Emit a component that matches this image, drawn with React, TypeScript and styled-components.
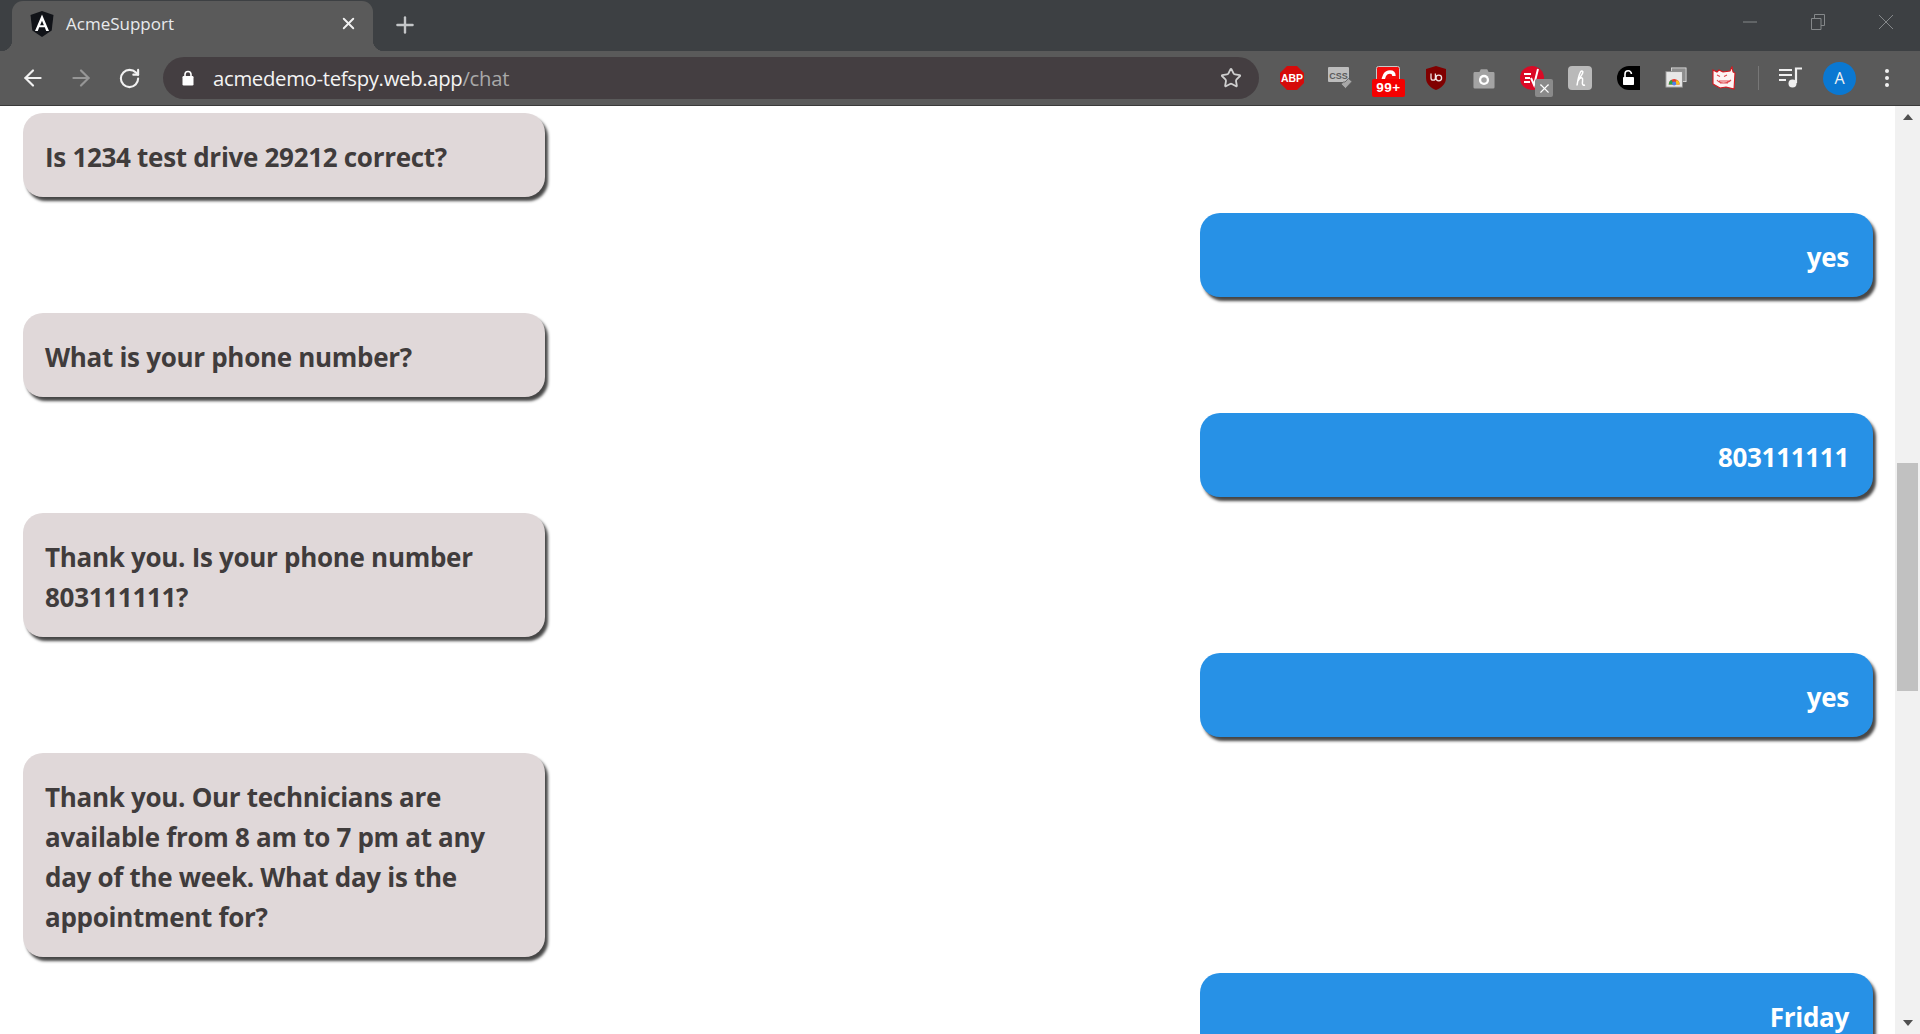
import React from 'react';
import styled, { createGlobalStyle } from 'styled-components';
import { ArrowLeft, ArrowRight, RotateCw, Star, Plus, X } from 'lucide-react';

const UI_FONT = '"Open Sans", "Noto Sans", "Liberation Sans", sans-serif';

const GlobalStyle = createGlobalStyle`
  html, body {
    margin: 0;
    padding: 0;
    height: 100%;
    overflow: hidden;
    background: #fff;
    font-family: ${UI_FONT};
  }
  * { box-sizing: border-box; }
`;

const messages = [
  { id: 1, from: 'bot', text: 'Is 1234 test drive 29212 correct?' },
  { id: 2, from: 'user', text: 'yes' },
  { id: 3, from: 'bot', text: 'What is your phone number?' },
  { id: 4, from: 'user', text: '803111111' },
  { id: 5, from: 'bot', text: 'Thank you. Is your phone number 803111111?' },
  { id: 6, from: 'user', text: 'yes' },
  {
    id: 7,
    from: 'bot',
    text: 'Thank you. Our technicians are available from 8 am to 7 pm at any day of the week. What day is the appointment for?',
  },
  { id: 8, from: 'user', text: 'Friday' },
];

const App: React.FC = () => (
  <Page>
    <GlobalStyle />
    <BrowserChrome>
      <TabStrip>
        <Tab>
          <AngularLogo />
          <TabTitle>AcmeSupport</TabTitle>
          <TabClose>
            <X size={19} strokeWidth={2.4} />
          </TabClose>
        </Tab>
        <NewTab>
          <Plus size={26} strokeWidth={2.2} />
        </NewTab>
        <WindowControls>
          <WindowButton>
            <svg width="14" height="14" viewBox="0 0 14 14">
              <path d="M0 7h14" stroke="#85888a" strokeWidth="1" />
            </svg>
          </WindowButton>
          <WindowButton>
            <svg width="14" height="16" viewBox="0 0 14 16" fill="none" stroke="#85888a">
              <path d="M.5 4.500h9.500v11H.5z" />
              <path d="M3.500 4V.5h10v11H10" />
            </svg>
          </WindowButton>
          <WindowButton>
            <svg width="16" height="16" viewBox="0 0 16 16">
              <path d="M1 1l14 14M15 1L1 15" stroke="#85888a" strokeWidth="1" />
            </svg>
          </WindowButton>
        </WindowControls>
      </TabStrip>
      <Toolbar>
        <NavButton>
          <ArrowLeft size={26} strokeWidth={2} />
        </NavButton>
        <NavButton $disabled>
          <ArrowRight size={26} strokeWidth={2} />
        </NavButton>
        <NavButton>
          <RotateCw size={23} strokeWidth={2.2} />
        </NavButton>
        <Omnibox>
          <LockIcon />
          <UrlText>
            acmedemo-tefspy.web.app<UrlPath>/chat</UrlPath>
          </UrlText>
          <StarButton>
            <Star size={22} strokeWidth={2} />
          </StarButton>
        </Omnibox>
        <Extensions>
          <ExtensionSlot><AbpIcon /></ExtensionSlot>
          <ExtensionSlot><CssIcon /></ExtensionSlot>
          <ExtensionSlot>
            <RedCIcon />
            <CountBadge>99+</CountBadge>
          </ExtensionSlot>
          <ExtensionSlot><ShieldIcon /></ExtensionSlot>
          <ExtensionSlot><CameraIcon /></ExtensionSlot>
          <ExtensionSlot>
            <VpnIcon />
            <OffBadge>
              <X size={15} strokeWidth={1.8} />
            </OffBadge>
          </ExtensionSlot>
          <ExtensionSlot><HIcon /></ExtensionSlot>
          <ExtensionSlot><UnlockIcon /></ExtensionSlot>
          <ExtensionSlot><ChromeWindowsIcon /></ExtensionSlot>
          <ExtensionSlot><CatIcon /></ExtensionSlot>
        </Extensions>
        <ToolbarDivider />
        <MusicIcon />
        <Avatar>A</Avatar>
        <MenuDots>
          <Dot />
          <Dot />
          <Dot />
        </MenuDots>
      </Toolbar>
    </BrowserChrome>
    <Viewport>
      <ChatArea>
        {messages.map((m) =>
          m.from === 'bot' ? (
            <BotBubble key={m.id}>{m.text}</BotBubble>
          ) : (
            <UserBubble key={m.id}>{m.text}</UserBubble>
          ),
        )}
      </ChatArea>
      <Scrollbar>
        <ScrollArrow $up />
        <ScrollTrack>
          <ScrollThumb />
        </ScrollTrack>
        <ScrollArrow />
      </Scrollbar>
    </Viewport>
  </Page>
);

export default App;

const AngularLogo = () => (
  <svg width="24" height="26" viewBox="0 0 24 26">
    <path d="M12 0L23.500 4l-1.800 15.500L12 26 2.300 19.500.5 4z" fill="#111318" />
    <path d="M12 3.500L5 20h2.800l1.400-3.700h5.600l1.400 3.700H19L12 3.500zm0 6.200l1.900 4.500h-3.800L12 9.700z" fill="#fff" />
  </svg>
);

const LockIcon = () => (
  <svg width="12" height="16" viewBox="0 0 12 16">
    <path d="M3 7V4.500a3 3 0 0 1 6 0V7" fill="none" stroke="#fff" strokeWidth="1.600" />
    <rect x="0.500" y="6" width="11" height="9.500" rx="1.200" fill="#fff" />
  </svg>
);

const AbpIcon = () => (
  <svg width="24" height="24" viewBox="0 0 24 24">
    <path d="M7 0h10l7 7v10l-7 7H7l-7-7V7z" fill="#d60a0a" />
    <text x="12" y="16" textAnchor="middle" fontFamily="Liberation Sans" fontWeight="700" fontSize="10.500" fill="#fff">ABP</text>
  </svg>
);

const CssIcon = () => (
  <svg width="24" height="22" viewBox="0 0 24 22">
    <rect x="0" y="0" width="21" height="15" rx="1" fill="#bdbdbd" />
    <text x="10.500" y="11.500" textAnchor="middle" fontFamily="Liberation Sans" fontWeight="700" fontSize="9" fill="#5a5a5a">CSS</text>
    <path d="M17 15l3.500-3.500 3.500 3-6.500 7-4.500-4.500 2.500-2z" fill="#a8a8a8" stroke="#5a5a5a" strokeWidth="0.800" />
  </svg>
);

const RedCIcon = () => (
  <svg width="24" height="24" viewBox="0 0 24 24">
    <rect x="0.500" y="0.500" width="23" height="23" rx="2" fill="#f20d0d" stroke="#c9c9c9" />
    <path d="M7 17C7 10 9.500 6 14 6c2.500 0 4 1.500 4 4" fill="none" stroke="#fff" strokeWidth="3.400" />
  </svg>
);

const ShieldIcon = () => (
  <svg width="20" height="24" viewBox="0 0 20 24">
    <path d="M10 0l10 3v9c0 6-5 10-10 12C5 22 0 18 0 12V3z" fill="#800000" />
    <path d="M5 7.500v4.500a2.200 2.200 0 0 0 4.400 0V7.500M10 12a2.800 2.800 0 1 0 5.600 0 2.800 2.800 0 1 0-5.600 0z" fill="none" stroke="#f0e4e4" strokeWidth="1.300" />
  </svg>
);

const CameraIcon = () => (
  <svg width="22" height="21" viewBox="0 0 24 22">
    <path d="M2 4h5l1.500-3h7L17 4h5a1.500 1.500 0 0 1 1.500 1.500v15A1.500 1.500 0 0 1 22 22H2a1.500 1.500 0 0 1-1.500-1.500v-15A1.500 1.500 0 0 1 2 4z" fill="#a3a3a3" />
    <circle cx="12" cy="12.500" r="5.500" fill="#fff" />
    <circle cx="12" cy="12.500" r="3" fill="#a3a3a3" />
  </svg>
);

const VpnIcon = () => (
  <svg width="24" height="24" viewBox="0 0 24 24">
    <circle cx="12" cy="12" r="12" fill="#da0a26" />
    <path d="M4 8h7M5 12h5M4 16h6" stroke="#fff" strokeWidth="1.800" />
    <path d="M11 12l3 7 4-16" fill="none" stroke="#fff" strokeWidth="2" />
  </svg>
);

const HIcon = () => (
  <svg width="24" height="24" viewBox="0 0 24 24">
    <rect width="24" height="24" rx="4" fill="#b9b9b9" />
    <path d="M9 19.500c.8-5 1.500-10 3.500-13.500 1.200-1.800 3-1 2.200 1-1 2.500-3.500 5-4.700 8 1-2 2.800-3.500 4-3 1.500.7.200 3.500.4 5.500.1 1.500 1.200 2 2.600 1.500" fill="none" stroke="#fff" strokeWidth="1.500" />
  </svg>
);

const UnlockIcon = () => (
  <svg width="23" height="24" viewBox="0 0 23 24">
    <path d="M12 0h11v24H12A12 12 0 0 1 12 0z" fill="#000" />
    <path d="M8 11V8a3.200 3.200 0 0 1 6.400 0" fill="none" stroke="#fff" strokeWidth="1.600" />
    <rect x="6" y="11" width="11" height="8" rx="0.800" fill="#fff" />
  </svg>
);

const ChromeWindowsIcon = () => (
  <svg width="22" height="22" viewBox="0 0 24 24">
    <rect x="7" y="1" width="16" height="15" fill="#8e8e8e" stroke="#eee" strokeWidth="0.800" />
    <rect x="1" y="5" width="18" height="17" fill="#e8e8e8" stroke="#8d8d8d" />
    <path d="M4 19a6 6 0 0 1 12 0z" fill="#e33b2e" />
    <path d="M4 19a6 6 0 0 1 3-5l3 5z" fill="#2aa24b" />
    <path d="M16 19a6 6 0 0 0-3-5l-3 5z" fill="#f7c21b" />
    <circle cx="10" cy="18" r="2.200" fill="#4d7ee8" />
  </svg>
);

const CatIcon = () => (
  <svg width="24" height="24" viewBox="0 0 24 24">
    <path d="M1 4l4 2 2-2 4 2 7-1 2-4 1 5 2 1-1 16-8-2-6 1-7-4z" fill="#fdf4f4" stroke="#d8141c" strokeWidth="1.100" />
    <path d="M5 9l3 1.500M15 9l-3 1.500M5 14c3 4 10 4 14 0M7 15h10M8 17h8" fill="none" stroke="#e0484e" strokeWidth="1.100" />
  </svg>
);

const MusicIcon = () => (
  <MusicWrap>
    <svg width="24" height="22" viewBox="0 0 24 22">
      <path d="M0 3h13M0 8h13M0 13h7" stroke="#f0f0f0" strokeWidth="2" />
      <path d="M17 16V1.500h6" fill="none" stroke="#f0f0f0" strokeWidth="2.200" />
      <circle cx="13.500" cy="16.500" r="4" fill="#f0f0f0" />
    </svg>
  </MusicWrap>
);

const Page = styled.div`
  height: 100vh;
  display: flex;
  flex-direction: column;
  overflow: hidden;
`;

const BrowserChrome = styled.header`
  flex: none;
  border-bottom: 1px solid #3a3a3a;
`;

const TabStrip = styled.div`
  height: 51px;
  padding-left: 12px;
  display: flex;
  align-items: flex-end;
  background: #3d4043;
`;

const Tab = styled.div`
  position: relative;
  width: 361px;
  height: 50px;
  padding: 0 15px 5px 18px;
  display: flex;
  align-items: center;
  border-radius: 11px 11px 0 0;
  background: #5a5a5a;

  &::before,
  &::after {
    content: '';
    position: absolute;
    bottom: 0;
    width: 11px;
    height: 11px;
  }

  &::before {
    left: -11px;
    background: radial-gradient(circle at 0 0, transparent 11px, #5a5a5a 11.500px);
  }

  &::after {
    right: -11px;
    background: radial-gradient(circle at 100% 0, transparent 11px, #5a5a5a 11.500px);
  }
`;

const TabTitle = styled.span`
  margin-left: 12px;
  flex: 1;
  color: #e8eaed;
  font-size: 17px;
`;

const TabClose = styled.span`
  display: flex;
  color: #f1f1f1;
`;

const NewTab = styled.div`
  width: 26px;
  height: 26px;
  margin: 0 0 13px 19px;
  color: #c4c6c8;
`;

const WindowControls = styled.div`
  margin-left: auto;
  height: 100%;
  padding: 0 0 8px;
  display: flex;
  align-items: center;
`;

const WindowButton = styled.div`
  width: 68px;
  display: flex;
  justify-content: center;
`;

const Toolbar = styled.div`
  height: 54px;
  padding: 0 0 0 20px;
  display: flex;
  align-items: center;
  background: #5a5a5a;
`;

const NavButton = styled.div<{ $disabled?: boolean }>`
  width: 26px;
  height: 26px;
  margin-right: 22px;
  display: flex;
  align-items: center;
  justify-content: center;
  color: ${({ $disabled }) => ($disabled ? '#969696' : '#f1f1f1')};
`;

const Omnibox = styled.div`
  width: 1096px;
  height: 42px;
  margin-left: -1px;
  padding: 0 17px 0 19px;
  display: flex;
  align-items: center;
  border-radius: 21px;
  background: #443e41;
`;

const UrlText = styled.span`
  margin-left: 19px;
  flex: 1;
  color: #f4f4f4;
  font-size: 20.300px;
  letter-spacing: -0.300px;
  white-space: nowrap;
`;

const UrlPath = styled.span`
  color: #a9a9a9;
`;

const StarButton = styled.span`
  display: flex;
  color: #cfcfcf;
`;

const Extensions = styled.div`
  margin-left: 9px;
  display: flex;
  align-items: center;
`;

const ExtensionSlot = styled.div`
  position: relative;
  width: 48px;
  height: 48px;
  display: flex;
  align-items: center;
  justify-content: center;
`;

const CountBadge = styled.span`
  position: absolute;
  left: 8px;
  top: 25px;
  width: 33px;
  height: 18px;
  border-radius: 2px;
  background: #f40000;
  color: #fff;
  font-family: 'Liberation Sans', sans-serif;
  font-size: 13.500px;
  font-weight: 700;
  line-height: 18px;
  letter-spacing: 0.500px;
  text-align: center;
`;

const OffBadge = styled.span`
  position: absolute;
  left: 27px;
  top: 25px;
  width: 18px;
  height: 18px;
  display: flex;
  align-items: center;
  justify-content: center;
  border-radius: 2px;
  background: #8a8a8a;
  color: #fff;
`;

const ToolbarDivider = styled.div`
  width: 1px;
  height: 24px;
  margin-left: 10px;
  background: #777;
`;

const MusicWrap = styled.div`
  margin-left: 20px;
  display: flex;
`;

const Avatar = styled.div`
  width: 33px;
  height: 33px;
  margin-left: 20px;
  display: flex;
  align-items: center;
  justify-content: center;
  border-radius: 50%;
  background: #0a78d2;
  color: #f2f2f2;
  font-size: 16px;
`;

const MenuDots = styled.div`
  margin-left: 29px;
  display: flex;
  flex-direction: column;
  gap: 3px;
`;

const Dot = styled.span`
  width: 4px;
  height: 4px;
  border-radius: 50%;
  background: #f1f1f1;
`;

const Viewport = styled.main`
  flex: 1;
  min-height: 0;
  display: flex;
`;

const ChatArea = styled.div`
  flex: 1;
  min-width: 0;
  padding: 7px 22px 0 23px;
  display: flex;
  flex-direction: column;
  gap: 16px;
  overflow: hidden;
`;

const BotBubble = styled.div`
  flex: none;
  align-self: flex-start;
  width: 522px;
  padding: 24px 22px 20px;
  border-radius: 20px;
  background: #e0d8d9;
  box-shadow: 3px 4px 3px rgba(0, 0, 0, 0.72);
  color: #403c3c;
  font-size: 26px;
  font-weight: 700;
  line-height: 40px;
  letter-spacing: -0.300px;
`;

const UserBubble = styled(BotBubble)`
  align-self: flex-end;
  width: 673px;
  padding: 24px 24px 20px 22px;
  background: #2791e6;
  color: #fff;
  text-align: right;
`;

const Scrollbar = styled.div`
  flex: none;
  width: 25px;
  display: flex;
  flex-direction: column;
  background: #f1f1f1;
`;

const ScrollArrow = styled.div<{ $up?: boolean }>`
  flex: none;
  height: 22px;
  display: flex;
  align-items: center;
  justify-content: center;

  &::before {
    content: '';
    border-left: 5px solid transparent;
    border-right: 5px solid transparent;
    ${({ $up }) => ($up ? 'border-bottom' : 'border-top')}: 6px solid #505050;
  }
`;

const ScrollTrack = styled.div`
  flex: 1;
  padding: 335px 2px 0;
`;

const ScrollThumb = styled.div`
  height: 228px;
  background: #c1c1c1;
`;
